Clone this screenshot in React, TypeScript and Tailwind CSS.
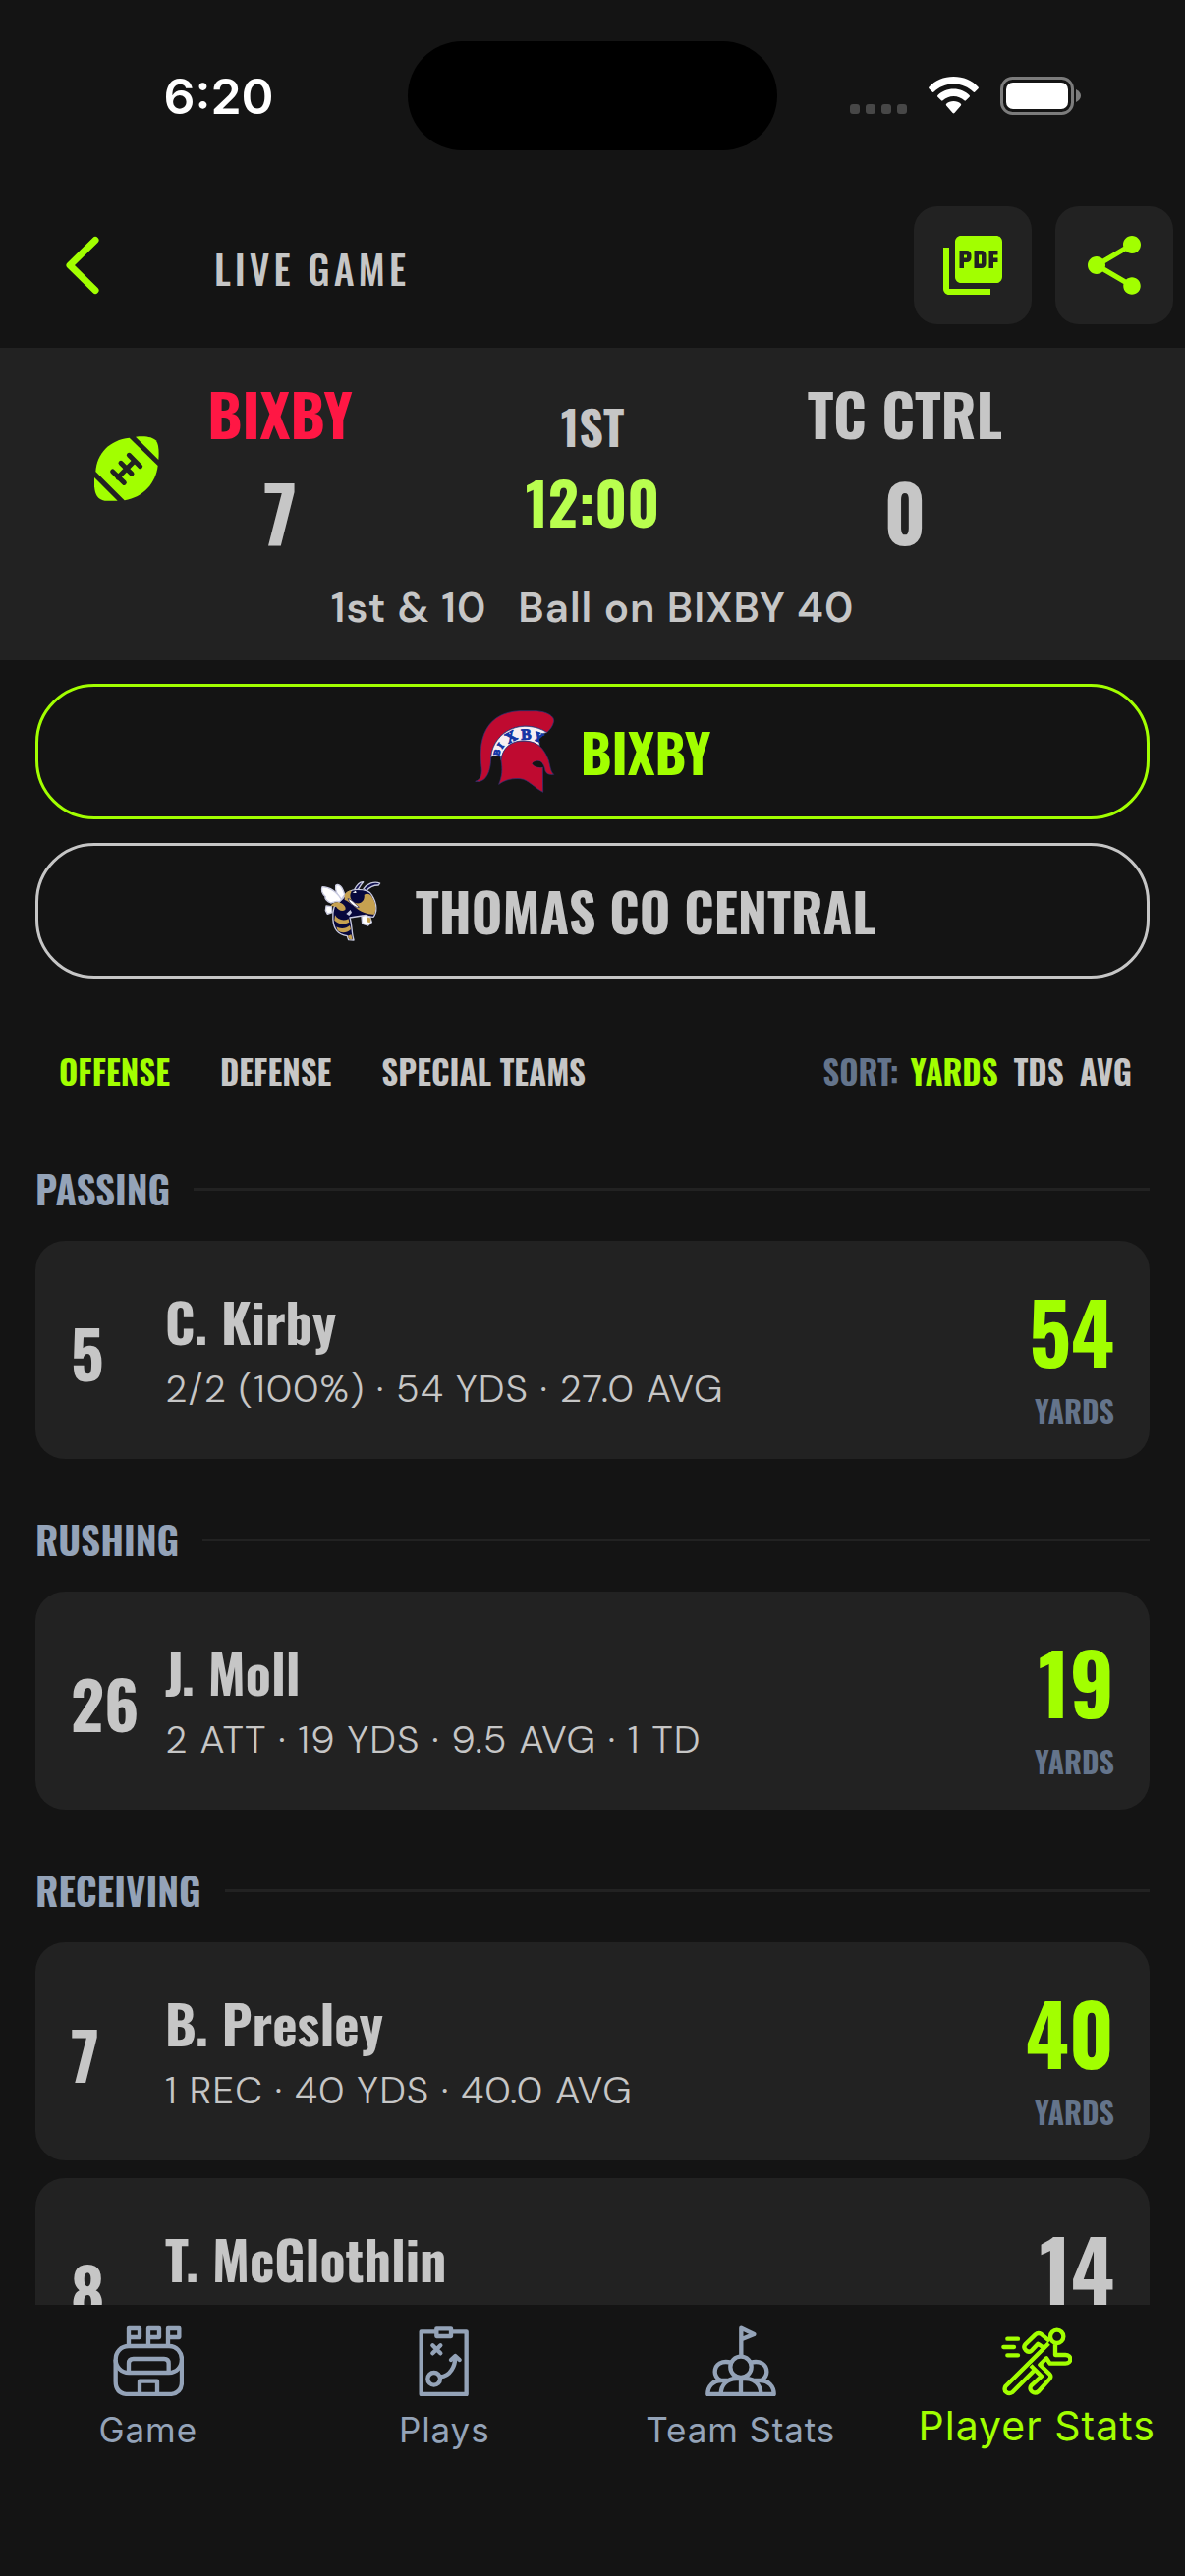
import { clsx } from 'clsx'
import type { ReactNode } from 'react'
import { MdPictureAsPdf, MdShare } from 'react-icons/md'

interface Player {
  number: string
  name: string
  detail: string
  yards: string
  leader: boolean
}

interface StatGroup {
  title: string
  players: Player[]
}

const statGroups: StatGroup[] = [
  {
    title: 'PASSING',
    players: [
      { number: '5', name: 'C. Kirby', detail: '2/2 (100%) · 54 YDS · 27.0 AVG', yards: '54', leader: true },
    ],
  },
  {
    title: 'RUSHING',
    players: [
      { number: '26', name: 'J. Moll', detail: '2 ATT · 19 YDS · 9.5 AVG · 1 TD', yards: '19', leader: true },
    ],
  },
  {
    title: 'RECEIVING',
    players: [
      { number: '7', name: 'B. Presley', detail: '1 REC · 40 YDS · 40.0 AVG', yards: '40', leader: true },
      { number: '8', name: 'T. McGlothlin', detail: '', yards: '14', leader: false },
    ],
  },
]

const units = ['OFFENSE', 'DEFENSE', 'SPECIAL TEAMS']
const sortKeys = ['YARDS', 'TDS', 'AVG']

const condensed = "font-['Oswald','Roboto_Condensed','Liberation_Sans_Narrow',sans-serif]"
const rounded = "font-['DM_Sans','Inter',sans-serif] tracking-wide [font-optical-sizing:none]"

function StatusBar() {
  return (
    <div className="grid h-[194px] shrink-0 grid-cols-[1fr_376px_1fr] items-center">
      <p className="pt-[2px] pl-[30px] text-center text-[50px] leading-[60px] font-semibold text-white">6:20</p>
      <div className="h-[111px] rounded-full bg-black" />
      <div className="flex items-center gap-[22px] pl-[74px]">
        <svg viewBox="0 0 58 38" className="h-[38px] w-[58px] fill-[#474747]" aria-hidden="true">
          <rect x="0" y="28" width="10" height="10" rx="3" />
          <rect x="16" y="28" width="10" height="10" rx="3" />
          <rect x="32" y="28" width="10" height="10" rx="3" />
          <rect x="48" y="28" width="10" height="10" rx="3" />
        </svg>
        <svg viewBox="0 0 51 38" className="h-[38px] w-[51px]" fill="white" aria-hidden="true">
          <path d="M25.500 0C35.500 0 44.500 4 50.500 10.500Q51.300 11.500 50.500 12.300L47 15.700Q46.300 16.300 45.500 15.600C40.500 10.500 33.500 7.500 25.500 7.500S10.500 10.500 5.500 15.600Q4.700 16.300 4 15.700L.5 12.300Q-.3 11.500.5 10.500C6.500 4 15.500 0 25.500 0Z" />
          <path d="M25.500 12.500C32 12.500 37.500 15 41.600 19Q42.500 20 41.600 20.800L38 24.300Q37.200 25 36.400 24.300C33.500 21.600 29.700 20 25.500 20S17.500 21.600 14.600 24.300Q13.800 25 13 24.300L9.400 20.800Q8.500 20 9.400 19C13.500 15 19 12.500 25.500 12.500Z" />
          <path d="M25.500 25C28.500 25 31 26 32.900 27.700Q33.600 28.600 32.900 29.400L26.400 37Q25.500 37.800 24.600 37L18.100 29.400Q17.400 28.600 18.100 27.700C20 26 22.500 25 25.500 25Z" />
        </svg>
        <svg viewBox="0 0 82 39" className="h-[39px] w-[82px]" fill="none" aria-hidden="true">
          <rect x="1.500" y="1.500" width="72" height="36" rx="11" stroke="#7c7c7c" strokeWidth="3" />
          <rect x="6" y="6" width="63" height="27" rx="7" fill="white" />
          <path d="M77 13C80 14.500 82 16.500 82 19.500S80 24.500 77 26Z" fill="#7c7c7c" />
        </svg>
      </div>
    </div>
  )
}

function Header() {
  return (
    <header className="flex h-[160px] shrink-0 items-center gap-6 pr-3 pb-2 pl-[60px]">
      <button type="button" aria-label="Back" className="flex h-[72px] w-[134px] items-center">
        <svg viewBox="0 0 48 60" className="h-[60px] w-[48px]" fill="none" aria-hidden="true">
          <path d="M37 4.500L11 30L37 55.500" stroke="#a2ff00" strokeWidth="7" strokeLinecap="round" strokeLinejoin="round" />
        </svg>
      </button>
      <h1 className={clsx(condensed, 'flex-1 pt-[6px] text-[40px] leading-[60px] font-medium tracking-widest')}>LIVE GAME</h1>
      <button type="button" aria-label="Export PDF" className="flex size-[120px] items-center justify-center rounded-3xl bg-[#222222]">
        <MdPictureAsPdf className="size-[72px] text-[#a2ff00]" />
      </button>
      <button type="button" aria-label="Share" className="flex size-[120px] items-center justify-center rounded-3xl bg-[#222222]">
        <MdShare className="size-[72px] text-[#a2ff00]" />
      </button>
    </header>
  )
}

function FootballIcon() {
  return (
    <svg viewBox="48 42 198 198" className="mt-[10px] size-[66px]" role="img" aria-label="Possession">
      <path d="M155 47L242 132C236 185 198 228 140 238L52 150C55 95 95 53 155 47Z" fill="#a2ff00" />
      <path d="M174 44C205 40 226 45 236 55C245 66 246 90 244 114Z" fill="#a2ff00" />
      <path d="M48 168L119 239H80C58 236 50 220 48 196Z" fill="#a2ff00" />
      <path d="M120 168L171 117M154 100L188 134M129 124L162 157M104 150L139 184" stroke="#222222" strokeWidth="15" strokeLinecap="round" />
    </svg>
  )
}

function TeamScore({ name, score, nameClass }: { name: string; score: string; nameClass?: string }) {
  return (
    <div className={clsx(condensed, 'text-center font-bold')}>
      <p className={clsx('text-[60px] leading-[96px] whitespace-nowrap', nameClass)}>{name}</p>
      <p className="text-[78px] leading-[104px]">{score}</p>
    </div>
  )
}

function Scoreboard() {
  return (
    <section aria-label="Score" className="h-[318px] shrink-0 bg-[#222222] px-24 pt-[18px]">
      <div className="grid grid-cols-[66px_246fr_390fr_246fr_66px] items-center">
        <FootballIcon />
        <TeamScore name="BIXBY" score="7" nameClass="text-[#ff1744]" />
        <div className={clsx(condensed, 'pt-1 text-center font-bold')}>
          <p className="text-[48px] leading-[72px]">1ST</p>
          <p className="text-[60px] leading-[80px] text-[#b9ff4f]">12:00</p>
        </div>
        <TeamScore name="TC CTRL" score="0" />
      </div>
      <p className={clsx(rounded, 'mt-[21px] flex justify-center gap-8 text-[42px] leading-[52px] font-semibold')}>
        <span>1st &amp; 10</span>
        <span>Ball on BIXBY 40</span>
      </p>
    </section>
  )
}

function SpartanLogo() {
  return (
    <svg viewBox="42 69 252 252" className="size-[84px]" aria-hidden="true">
      <g stroke="#27367f" strokeWidth="2">
        <path d="M44 286C62 280 66 264 62 235C52 140 88 75 180 71H230C262 73 286 86 284 103C281 118 272 128 263 137C190 90 100 130 92 212C92 250 80 292 44 286Z" fill="#bf0a30" />
        <path d="M92 212C100 130 190 92 264 137C252 138 245 142 237 150L241 178C200 148 130 158 123 222L121 210Q100 205 92 212Z" fill="#f7eef2" />
        <path d="M123 222C126 180 158 161 195 163C238 163 256 190 268 222C274 245 274 256 284 265C270 266 262 264 258 254C256 238 248 225 238 224C224 224 218 230 218 232C222 240 236 245 250 243L251 319C225 306 206 280 182 278C160 276 136 280 116 295C126 270 128 250 123 222Z" fill="#bf0a30" />
      </g>
      <path d="M218 232C222 224 240 220 249 232L250 243C236 244 222 240 218 232Z" fill="#141414" />
      <g
        fill="#1236a5"
        stroke="#1236a5"
        strokeWidth="3"
        fontFamily="Liberation Serif, serif"
        fontWeight="700"
        textAnchor="middle"
      >
        <text fontSize="27" transform="translate(119 200) rotate(-76)">B</text>
        <text fontSize="29" transform="translate(129 182) rotate(-54)">I</text>
        <text fontSize="46" transform="translate(160 163) rotate(-28)">X</text>
        <text fontSize="46" transform="translate(200 158) rotate(-2)">B</text>
        <text fontSize="40" transform="translate(233 163) rotate(20)">Y</text>
      </g>
    </svg>
  )
}

function HornetLogo() {
  return (
    <svg viewBox="15 45 252 252" className="size-[84px]" aria-hidden="true">
      <g stroke="#c9cbe0" strokeWidth="4" strokeLinejoin="round">
        <path d="M95 94C104 86 116 98 122 122L112 136C100 124 93 108 95 94Z" fill="#ffffff" />
        <path d="M54 98C74 98 102 112 116 144L98 142L80 147C68 142 60 132 64 128C55 120 50 108 54 98Z" fill="#ffffff" />
        <path d="M66 156L82 158L84 176L70 181L64 170Z" fill="#ffffff" />
        <path d="M150 110C158 94 166 82 179 83C170 92 166 102 160 112Z" fill="#10104e" />
        <path d="M180 104C192 88 212 80 230 87L226 93C208 92 198 100 188 110Z" fill="#10104e" />
        <path d="M90 160C84 180 84 214 98 232C106 242 118 246 130 248L134 260L150 261L147 248C144 234 144 210 138 192L176 186L210 190C222 176 222 150 206 124C200 108 180 106 160 106C140 106 124 118 118 132Z" fill="#08083c" />
        <path d="M174 188L186 184L200 190L205 206L194 216L176 210Z" fill="#ffffff" />
      </g>
      <g fill="#c6a150">
        <path d="M122 122C130 110 145 106 142 114C134 128 144 144 158 148C176 150 184 136 182 122C192 116 203 121 206 130C218 148 220 166 213 182C196 184 172 176 154 160C142 150 128 138 122 138Z" />
        <path d="M80 156C84 146 98 142 108 146C120 150 128 160 124 168C114 176 102 168 96 158Z" />
        <path d="M93 184C100 198 118 204 134 196L136 206C120 214 102 212 91 200Z" />
        <path d="M97 220C110 228 126 226 138 216L141 228C128 240 112 240 101 232Z" />
        <path d="M131 248L142 244L146 258L137 259Z" />
        <path d="M190 190L203 194L200 208L190 205Z" />
      </g>
      <path d="M132 134C144 136 154 150 166 160L160 161C146 154 138 148 132 134Z" fill="#ffffff" stroke="#10104e" strokeWidth="2" />
      <path d="M146 116L156 110L158 117Z" fill="#ffffff" />
      <path d="M127 180L140 168L144 176L136 186Z" fill="#c9cbe0" />
    </svg>
  )
}

function TeamButton({ name, logo, active }: { name: string; logo: ReactNode; active?: boolean }) {
  return (
    <button
      type="button"
      aria-pressed={Boolean(active)}
      className={clsx(
        condensed,
        'flex h-[138px] w-full items-center justify-center gap-6 rounded-[60px] border-[3px] text-[54px] leading-[84px] font-bold',
        active ? 'border-[#a2ff00] text-[#a2ff00]' : 'border-[#c6c6c6]',
      )}
    >
      {logo}
      <span>{name}</span>
    </button>
  )
}

function Filters() {
  return (
    <div className={clsx(condensed, 'mt-[63px] flex items-center justify-between pr-[18px] pl-6 text-[33px] leading-[64px] font-bold')}>
      <div className="flex gap-[51px]">
        {units.map((unit, index) => (
          <button key={unit} type="button" className={clsx(index === 0 && 'text-[#a2ff00]')}>
            {unit}
          </button>
        ))}
      </div>
      <div className="flex gap-4">
        <span className="-mr-1 text-[#64748b]">SORT:</span>
        {sortKeys.map((key, index) => (
          <button key={key} type="button" className={clsx(index === 0 && 'text-[#a2ff00]')}>
            {key}
          </button>
        ))}
      </div>
    </div>
  )
}

function PlayerCard({ player }: { player: Player }) {
  return (
    <article className="flex h-[222px] items-center rounded-[30px] bg-[#222222] px-9">
      <p className={clsx(condensed, 'w-24 shrink-0 pt-1 text-[66px] leading-[96px] font-bold')}>{player.number}</p>
      <div className="flex-1 pt-1">
        <h3 className={clsx(condensed, 'text-[54px] leading-[72px] font-bold')}>{player.name}</h3>
        <p className={clsx(rounded, 'mt-1 min-h-[58px] text-[39px] leading-[58px] font-light')}>{player.detail}</p>
      </div>
      <div className={clsx(condensed, 'pt-4 text-right font-bold')}>
        <p className={clsx('text-[84px] leading-[108px]', player.leader && 'text-[#a2ff00]')}>{player.yards}</p>
        <p className="text-[30px] leading-[56px] text-[#64748b]">YARDS</p>
      </div>
    </article>
  )
}

function StatSection({ group }: { group: StatGroup }) {
  return (
    <section className="mb-12">
      <div className="mb-[18px] flex h-[69px] items-center gap-6">
        <h2 className={clsx(condensed, 'pb-1 text-[39px] leading-[60px] font-bold text-[#94a3b8]')}>{group.title}</h2>
        <div className="h-[3px] flex-1 bg-[#222222]" />
      </div>
      <div className="space-y-[18px]">
        {group.players.map((player) => (
          <PlayerCard key={player.name} player={player} />
        ))}
      </div>
    </section>
  )
}

function NavIcon({ viewBox, children }: { viewBox: string; children: ReactNode }) {
  return (
    <svg
      viewBox={viewBox}
      className="size-[72px]"
      fill="none"
      stroke="currentColor"
      strokeWidth="13"
      strokeLinejoin="round"
      aria-hidden="true"
    >
      {children}
    </svg>
  )
}

const navItems = [
  {
    label: 'Game',
    icon: (
      <NavIcon viewBox="102 81 216 216">
        <path d="M150 142V90H183V117H150M210 142V90H243V117H210M270 142V90H304V117H270" />
        <path d="M150 144H273C297 144 312 163 312 185C312 208 295 225 273 225H150C128 225 110 208 110 185C110 162 126 144 150 144Z" />
        <path d="M150 224V197Q150 183 164 183H258Q272 183 272 197V224" />
        <path d="M110 185V252Q110 291 150 291H272Q312 291 312 252V185M183 291V251H237V291" />
      </NavIcon>
    ),
  },
  {
    label: 'Plays',
    icon: (
      <NavIcon viewBox="1008 81 216 216">
        <path d="M1093 100H1046V291H1184V100H1137M1093 91H1137V114H1093Z" />
        <path d="M1081 142L1105 166M1105 142L1081 166M1137 186L1150 174L1163 186" strokeLinecap="round" />
        <path d="M1150 176C1150 205 1135 236 1104 238" />
        <circle cx="1085" cy="244" r="19" />
      </NavIcon>
    ),
  },
  {
    label: 'Team Stats',
    icon: (
      <NavIcon viewBox="-108 0 216 216">
        <path d="M1 94V8L40 27L1 43" />
        <circle cx="0" cy="127" r="32" />
        <path d="M-30 113C-58 106 -79 118 -79 142C-79 153 -73 162 -62 168M30 113C58 106 79 118 79 142C79 153 73 162 62 168" />
        <path d="M-61 210C-61 180 -40 162 -14 162H14C40 162 61 180 61 210M0 162V210" />
        <path d="M-40 168H-58C-85 168 -101 186 -101 210H101C101 186 85 168 58 168H40" />
      </NavIcon>
    ),
  },
  {
    label: 'Player Stats',
    icon: (
      <NavIcon viewBox="-108 0 216 216">
        <circle cx="62" cy="34" r="20" />
        <path d="M-89 41H-57M-101 66H-69M-89 91H-57" strokeLinecap="round" />
        <path d="M40 48L13 26Q4 21 -4 28L-35 58C-44 70 -28 86 -16 77L4 56L20 67M37 55L-95 186C-103 202 -86 212 -74 204L-6 136" />
        <path d="M57 58V90H88C108 90 108 116 88 116H41L30 100L10 120L40 149Q46 156 40 163L6 201C-8 213 -26 198 -17 184L15 155L-18 122" />
      </NavIcon>
    ),
  },
]

function BottomNav({ current }: { current: string }) {
  return (
    <nav className="grid h-[276px] shrink-0 grid-cols-4 items-start bg-[#141414] pt-[21px]">
      {navItems.map(({ label, icon }) => (
        <button
          key={label}
          type="button"
          aria-current={label === current ? 'page' : undefined}
          className={clsx(
            'flex flex-col items-center tracking-wide whitespace-nowrap',
            label === current ? 'gap-[6px] text-[41px] leading-[48px] text-[#a2ff00]' : 'gap-3 text-[35px] leading-[44px] text-[#94a3b8]',
          )}
        >
          {icon}
          {label}
        </button>
      ))}
    </nav>
  )
}

export default function App() {
  return (
    <div className="flex h-screen flex-col overflow-hidden bg-[#141414] font-['Inter',sans-serif] text-[#c6c6c6]">
      <StatusBar />
      <Header />
      <Scoreboard />
      <main className="min-h-0 flex-1 overflow-y-auto px-9 pt-6 [scrollbar-width:none]">
        <div className="space-y-6">
          <TeamButton name="BIXBY" logo={<SpartanLogo />} active />
          <TeamButton name="THOMAS CO CENTRAL" logo={<HornetLogo />} />
        </div>
        <Filters />
        <div className="mt-[53px]">
          {statGroups.map((group) => (
            <StatSection key={group.title} group={group} />
          ))}
        </div>
      </main>
      <BottomNav current="Player Stats" />
    </div>
  )
}
